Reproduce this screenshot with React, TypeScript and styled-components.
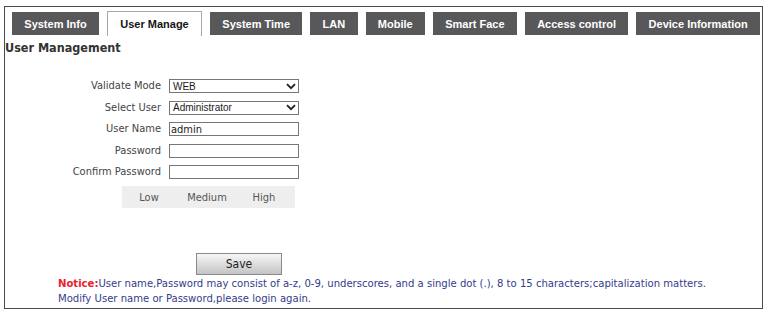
import React from "react";
import styled, { createGlobalStyle } from "styled-components";

const GlobalStyle = createGlobalStyle`
  body {
    margin: 0;
    background: #ffffff;
  }
`;

const tabs = [
  "System Info",
  "User Manage",
  "System Time",
  "LAN",
  "Mobile",
  "Smart Face",
  "Access control",
  "Device Information",
];

const Page = styled.div`
  padding: 6px 0 0 4px;
`;

const Panel = styled.div`
  box-sizing: border-box;
  width: 759px;
  height: 303px;
  border: 1px solid #4a4a4a;
  display: flex;
  flex-direction: column;
`;

const TabBar = styled.div`
  display: flex;
  gap: 8px;
  padding: 5px 0 0 7px;
  height: 24px;
`;

const Tab = styled.div<{ $active?: boolean }>`
  box-sizing: border-box;
  height: ${(p) => (p.$active ? "25px" : "23px")};
  margin-top: ${(p) => (p.$active ? "-1px" : "0")};
  padding: 0 12.3px;
  display: flex;
  align-items: center;
  font-family: "Liberation Sans", Arial, sans-serif;
  font-weight: bold;
  font-size: 11px;
  white-space: nowrap;
  color: ${(p) => (p.$active ? "#151515" : "#ffffff")};
  background: ${(p) => (p.$active ? "#ffffff" : "#58585a")};
  border: ${(p) => (p.$active ? "1px solid #a8a8a8" : "none")};
  border-bottom: none;
`;

const Heading = styled.div`
  margin: 4px 0 0 0;
  font-family: "DejaVu Sans Condensed", "DejaVu Sans", sans-serif;
  font-weight: bold;
  font-size: 12.5px;
  line-height: 15px;
  color: #333333;
`;

const Form = styled.div`
  display: grid;
  grid-template-columns: 156px 130px;
  column-gap: 8px;
  row-gap: 7.5px;
  margin-top: 24px;
  align-items: center;
`;

const Label = styled.div`
  text-align: right;
  font-family: "DejaVu Sans Condensed", "DejaVu Sans", sans-serif;
  font-size: 11px;
  line-height: 14px;
  color: #444444;
  white-space: nowrap;
`;

const Field = styled.div<{ $select?: boolean }>`
  box-sizing: border-box;
  height: 14px;
  border: 1px solid #767676;
  background: #ffffff;
  display: flex;
  align-items: center;
  justify-content: space-between;
  padding: 0 2px 0 ${(p) => (p.$select ? "3px" : "1px")};
  font-family: ${(p) =>
    p.$select
      ? '"Liberation Sans", Arial, sans-serif'
      : '"DejaVu Sans Condensed", "DejaVu Sans", sans-serif'};
  font-size: ${(p) => (p.$select ? "10px" : "11px")};
  color: #1a1a1a;
`;

const Chevron = () => (
  <svg width="10" height="7" viewBox="0 0 10 7">
    <path d="M1 1.2 L5 5.2 L9 1.2" fill="none" stroke="#222" strokeWidth="1.9" />
  </svg>
);

const Strength = styled.div`
  box-sizing: border-box;
  width: 173px;
  height: 22px;
  margin: 7px 0 0 117px;
  padding: 0 5px 0 0;
  background: #eeeeee;
  display: grid;
  grid-template-columns: 54px 62px 1fr;
  align-items: center;
  text-align: center;
  font-family: "DejaVu Sans Condensed", "DejaVu Sans", sans-serif;
  font-size: 11px;
  color: #555555;
`;

const SaveButton = styled.div`
  box-sizing: border-box;
  width: 86px;
  height: 22px;
  margin: 45px 0 0 191px;
  border: 1px solid #8a8a8a;
  background: linear-gradient(#f7f7f7, #dadada 55%, #c4c4c4);
  display: flex;
  align-items: center;
  justify-content: center;
  font-family: "DejaVu Sans Condensed", "DejaVu Sans", sans-serif;
  font-size: 12px;
  color: #222222;
`;

const Notice = styled.div`
  margin: 1px 0 0 53px;
  font-family: "DejaVu Sans Condensed", "DejaVu Sans", sans-serif;
  font-size: 11.2px;
  line-height: 15px;
  color: #333c8c;
`;

const NoticeTag = styled.span`
  color: #e8212b;
  font-weight: bold;
`;

const rows: { label: string; value: string; select?: boolean }[] = [
  { label: "Validate Mode", value: "WEB", select: true },
  { label: "Select User", value: "Administrator", select: true },
  { label: "User Name", value: "admin" },
  { label: "Password", value: "" },
  { label: "Confirm Password", value: "" },
];

export default function App() {
  return (
    <Page>
      <GlobalStyle />
      <Panel>
        <TabBar>
          {tabs.map((t) => (
            <Tab key={t} $active={t === "User Manage"}>
              {t}
            </Tab>
          ))}
        </TabBar>
        <Heading>User Management</Heading>
        <Form>
          {rows.map((r) => (
            <React.Fragment key={r.label}>
              <Label>{r.label}</Label>
              <Field $select={r.select}>
                <span>{r.value}</span>
                {r.select && <Chevron />}
              </Field>
            </React.Fragment>
          ))}
        </Form>
        <Strength>
          <span>Low</span>
          <span>Medium</span>
          <span>High</span>
        </Strength>
        <SaveButton>Save</SaveButton>
        <Notice>
          <div>
            <NoticeTag>Notice:</NoticeTag>User name,Password may consist of a-z,
            0-9, underscores, and a single dot (.), 8 to 15
            characters;capitalization matters.
          </div>
          <div>Modify User name or Password,please login again.</div>
        </Notice>
      </Panel>
    </Page>
  );
}
